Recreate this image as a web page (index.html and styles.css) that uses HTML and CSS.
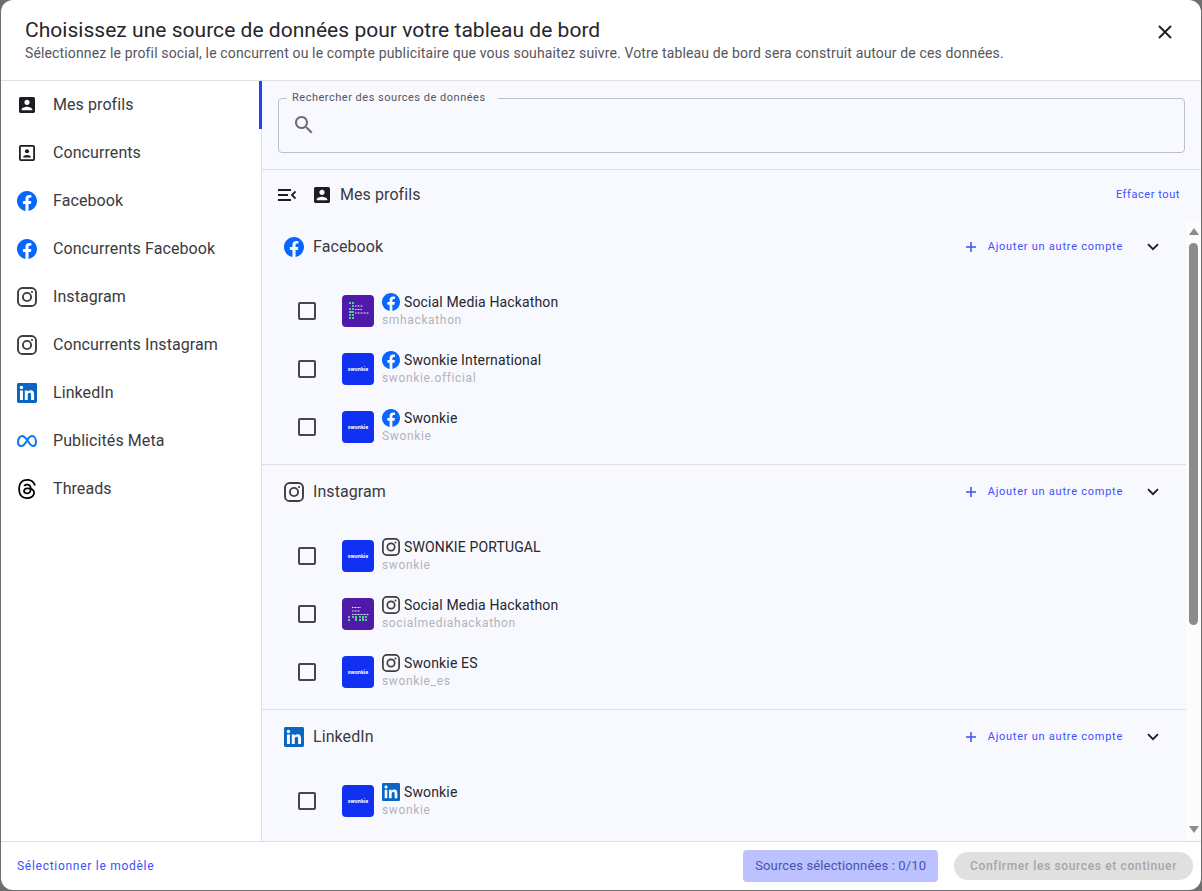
FILE: index.html
```html
<!DOCTYPE html>
<html lang="fr">
<head>
<meta charset="utf-8">
<title>Sources de données</title>
<link rel="stylesheet" href="styles.css">
</head>
<body>
<svg class="defs" aria-hidden="true">
  <symbol id="i-fb" viewBox="0 0 24 24"><path fill="#0866ff" d="M24 12.073c0-6.627-5.373-12-12-12s-12 5.373-12 12c0 5.99 4.388 10.954 10.125 11.854v-8.385H7.078v-3.47h3.047V9.43c0-3.007 1.792-4.669 4.533-4.669 1.312 0 2.686.235 2.686.235v2.953H15.83c-1.491 0-1.956.925-1.956 1.874v2.25h3.328l-.532 3.47h-2.796v8.385C19.612 23.027 24 18.062 24 12.073z"/></symbol>
  <symbol id="i-ig" viewBox="0 0 20 20"><rect x="1" y="1" width="18" height="18" rx="4.6" fill="none" stroke="#3d3d42" stroke-width="1.9"/><circle cx="10" cy="10" r="4.1" fill="none" stroke="#3d3d42" stroke-width="1.9"/><circle cx="15" cy="5" r="1.1" fill="#3d3d42"/></symbol>
  <symbol id="i-li" viewBox="0 0 24 24"><path fill="#0a66c2" d="M20.447 20.452h-3.554v-5.569c0-1.328-.027-3.037-1.852-3.037-1.853 0-2.136 1.445-2.136 2.939v5.667H9.351V9h3.414v1.561h.046c.477-.9 1.637-1.85 3.37-1.85 3.601 0 4.267 2.37 4.267 5.455v6.286zM5.337 7.433c-1.144 0-2.063-.926-2.063-2.065 0-1.138.92-2.063 2.063-2.063 1.14 0 2.064.925 2.064 2.063 0 1.139-.925 2.065-2.064 2.065zm1.782 13.019H3.555V9h3.564v11.452zM22.225 0H1.771C.792 0 0 .774 0 1.729v20.542C0 23.227.792 24 1.771 24h20.451C23.2 24 24 23.227 24 22.271V1.729C24 .774 23.2 0 22.222 0h.003z"/></symbol>
  <symbol id="i-meta" viewBox="0 0 20 20"><path fill="none" stroke="#0a78f5" stroke-width="2" d="M5 5C2.400 5 1 8.400 1 11c0 2.500 1.400 4 3.500 4C7 15 8.800 11.600 10.300 9 11.800 6.400 13 5 15 5c2.600 0 4 3.200 4 6 0 2.500-1.100 4-3 4-2.500 0-4.300-3.800-5.900-6C8.300 6.500 7 5 5 5z"/></symbol>
  <symbol id="i-th" viewBox="0 0 24 24"><path fill="#000" d="M12.186 24h-.007c-3.581-.024-6.334-1.205-8.184-3.509C2.35 18.44 1.5 15.586 1.472 12.01v-.017c.03-3.579.879-6.43 2.525-8.482C5.845 1.205 8.6.024 12.18 0h.014c2.746.02 5.043.725 6.826 2.098 1.677 1.29 2.858 3.13 3.509 5.467l-2.04.569c-1.104-3.96-3.898-5.984-8.304-6.015-2.91.022-5.11.936-6.54 2.717C4.307 6.504 3.616 8.914 3.589 12c.027 3.086.718 5.496 2.057 7.164 1.43 1.783 3.631 2.698 6.54 2.717 2.623-.02 4.358-.631 5.8-2.045 1.647-1.613 1.618-3.593 1.09-4.798-.31-.71-.873-1.3-1.634-1.75-.192 1.352-.622 2.446-1.284 3.272-.886 1.102-2.14 1.704-3.73 1.79-1.202.065-2.361-.218-3.259-.801-1.063-.689-1.685-1.74-1.752-2.964-.065-1.19.408-2.285 1.33-3.082.88-.76 2.119-1.207 3.583-1.291a13.853 13.853 0 0 1 3.02.142c-.126-.742-.375-1.332-.75-1.757-.513-.586-1.308-.883-2.359-.89h-.029c-.844 0-1.992.232-2.721 1.32L7.734 7.847c.98-1.454 2.568-2.256 4.478-2.256h.044c3.194.02 5.097 1.975 5.287 5.388.108.046.216.094.321.142 1.49.7 2.58 1.761 3.154 3.07.797 1.82.871 4.79-1.548 7.158-1.85 1.81-4.094 2.628-7.277 2.65Zm1.003-11.69c-.242 0-.487.007-.739.021-1.836.103-2.98.946-2.916 2.143.067 1.256 1.452 1.839 2.784 1.767 1.224-.065 2.818-.543 3.086-3.71a10.5 10.5 0 0 0-2.215-.221z"/></symbol>
  <symbol id="i-acc" viewBox="0.75 0.75 22.5 22.5"><path fill="#1c1c22" d="M3 5v14c0 1.100.89 2 2 2h14c1.100 0 2-.9 2-2V5c0-1.100-.9-2-2-2H5c-1.110 0-2 .9-2 2zm12 4c0 1.660-1.340 3-3 3s-3-1.340-3-3 1.340-3 3-3 3 1.340 3 3zm-9 8c0-2 4-3.100 6-3.100s6 1.100 6 3.100v1H6v-1z"/></symbol>
  <symbol id="i-acc-o" viewBox="0.75 0.75 22.5 22.5"><rect x="4" y="4" width="16" height="16" rx="1.200" fill="none" stroke="#1c1c22" stroke-width="2"/><circle cx="12" cy="10" r="2.300" fill="#1c1c22"/><path fill="#1c1c22" d="M7.500 17c0-1.900 3-2.700 4.500-2.700s4.500.8 4.500 2.700z"/></symbol>
  <symbol id="i-chev" viewBox="0 0 12 8"><path d="M1 1.200l5 5 5-5" fill="none" stroke="#1c1c22" stroke-width="1.800"/></symbol>
  <symbol id="i-plus" viewBox="0 0 12 12"><path d="M6 1v10M1 6h10" fill="none" stroke="#3d50fa" stroke-width="1.500"/></symbol>
  <symbol id="t-g1" viewBox="0 0 32 32"><g fill="#4fd08c"><rect x="7" y="7" width="2" height="2"/><rect x="10" y="7" width="2" height="2"/><rect x="10" y="10" width="2" height="2"/><rect x="7" y="13" width="2" height="2"/><rect x="10" y="13" width="2" height="2"/><rect x="7" y="16" width="5" height="2"/><rect x="7" y="19" width="2" height="2"/><rect x="10" y="19" width="2" height="2"/><rect x="7" y="22" width="2" height="2"/><rect x="10" y="22" width="2" height="2"/></g><g fill="none" stroke="#e9e4f7" stroke-dasharray="1 .5"><path d="M13 11h8M13 14.500h7M13 18h14"/></g></symbol>
  <symbol id="t-g2" viewBox="0 0 32 32"><g fill="none" stroke="#e9e4f7" stroke-dasharray="1 .5"><path d="M10 9.500h9M10 13h8M10 16.500h17"/></g><g fill="#4fd08c"><rect x="6" y="18" width="2" height="2"/><rect x="6" y="21" width="2" height="2"/><rect x="10" y="18" width="2" height="2"/><rect x="13" y="18" width="2" height="5"/><rect x="17" y="18" width="2" height="2"/><rect x="17" y="21" width="2" height="2"/><rect x="20" y="18" width="2" height="5"/><rect x="23" y="18" width="2" height="2"/><rect x="23" y="21" width="2" height="2"/></g></symbol>
</svg>

<div class="modal">
  <header class="head">
    <div class="head-text">
      <h1 class="title">Choisissez une source de données pour votre tableau de bord</h1>
      <p class="subtitle">Sélectionnez le profil social, le concurrent ou le compte publicitaire que vous souhaitez suivre. Votre tableau de bord sera construit autour de ces données.</p>
    </div>
    <svg class="close" viewBox="0 0 14 14"><path d="M1 1l12 12M13 1L1 13" fill="none" stroke="#1c1c22" stroke-width="1.900"/></svg>
  </header>

  <div class="body">
    <nav class="side">
      <a class="side-item is-active"><svg class="ic20"><use href="#i-acc"/></svg><span>Mes profils</span></a>
      <a class="side-item"><svg class="ic20"><use href="#i-acc-o"/></svg><span>Concurrents</span></a>
      <a class="side-item"><svg class="ic20"><use href="#i-fb"/></svg><span>Facebook</span></a>
      <a class="side-item"><svg class="ic20"><use href="#i-fb"/></svg><span>Concurrents Facebook</span></a>
      <a class="side-item"><svg class="ic20"><use href="#i-ig"/></svg><span>Instagram</span></a>
      <a class="side-item"><svg class="ic20"><use href="#i-ig"/></svg><span>Concurrents Instagram</span></a>
      <a class="side-item"><svg class="ic20"><use href="#i-li"/></svg><span>LinkedIn</span></a>
      <a class="side-item"><svg class="ic20"><use href="#i-meta"/></svg><span>Publicités Meta</span></a>
      <a class="side-item"><svg class="ic20"><use href="#i-th"/></svg><span>Threads</span></a>
    </nav>

    <main class="main">
      <div class="search-wrap">
        <fieldset class="search">
          <legend class="search-label">Rechercher des sources de données</legend>
          <svg class="search-ic" viewBox="0 0 24 24"><path fill="#6b6b72" d="M15.500 14h-.79l-.28-.27C15.410 12.590 16 11.110 16 9.500 16 5.910 13.090 3 9.500 3S3 5.910 3 9.500 5.910 16 9.500 16c1.610 0 3.090-.59 4.230-1.570l.27.28v.79l5 4.990L20.490 19l-4.990-5zm-6 0C7.010 14 5 11.990 5 9.500S7.010 5 9.500 5 14 7.010 14 9.500 11.990 14 9.500 14z"/></svg>
        </fieldset>
      </div>

      <div class="toolbar">
        <svg class="collapse" viewBox="0 0 18 12"><path d="M0 1h13M0 6h10M0 11h13M17.500 2.500L14 6l3.500 3.500" fill="none" stroke="#1c1c22" stroke-width="1.800"/></svg>
        <svg class="ic20"><use href="#i-acc"/></svg>
        <span class="toolbar-title">Mes profils</span>
        <a class="clear">Effacer tout</a>
      </div>

      <div class="list-area">
        <div class="list">
          <section class="group">
            <div class="group-head">
              <svg class="ic20"><use href="#i-fb"/></svg>
              <span class="group-name">Facebook</span>
              <a class="add"><svg class="plus"><use href="#i-plus"/></svg><span class="add-text">Ajouter un autre compte</span></a>
              <svg class="chev"><use href="#i-chev"/></svg>
            </div>
            <div class="row"><span class="check"></span><span class="tile tile-p"><svg class="tile-art"><use href="#t-g1"/></svg></span><div class="info"><div class="name"><svg class="ic18"><use href="#i-fb"/></svg>Social Media Hackathon</div><div class="handle">smhackathon</div></div></div>
            <div class="row"><span class="check"></span><span class="tile tile-s">swonkie</span><div class="info"><div class="name"><svg class="ic18"><use href="#i-fb"/></svg>Swonkie International</div><div class="handle">swonkie.official</div></div></div>
            <div class="row"><span class="check"></span><span class="tile tile-s">swonkie</span><div class="info"><div class="name"><svg class="ic18"><use href="#i-fb"/></svg>Swonkie</div><div class="handle">Swonkie</div></div></div>
          </section>
          <section class="group">
            <div class="group-head">
              <svg class="ic20"><use href="#i-ig"/></svg>
              <span class="group-name">Instagram</span>
              <a class="add"><svg class="plus"><use href="#i-plus"/></svg><span class="add-text">Ajouter un autre compte</span></a>
              <svg class="chev"><use href="#i-chev"/></svg>
            </div>
            <div class="row"><span class="check"></span><span class="tile tile-s">swonkie</span><div class="info"><div class="name"><svg class="ic18"><use href="#i-ig"/></svg>SWONKIE PORTUGAL</div><div class="handle">swonkie</div></div></div>
            <div class="row"><span class="check"></span><span class="tile tile-p"><svg class="tile-art"><use href="#t-g2"/></svg></span><div class="info"><div class="name"><svg class="ic18"><use href="#i-ig"/></svg>Social Media Hackathon</div><div class="handle">socialmediahackathon</div></div></div>
            <div class="row"><span class="check"></span><span class="tile tile-s">swonkie</span><div class="info"><div class="name"><svg class="ic18"><use href="#i-ig"/></svg>Swonkie ES</div><div class="handle">swonkie_es</div></div></div>
          </section>
          <section class="group">
            <div class="group-head">
              <svg class="ic20"><use href="#i-li"/></svg>
              <span class="group-name">LinkedIn</span>
              <a class="add"><svg class="plus"><use href="#i-plus"/></svg><span class="add-text">Ajouter un autre compte</span></a>
              <svg class="chev"><use href="#i-chev"/></svg>
            </div>
            <div class="row"><span class="check"></span><span class="tile tile-s">swonkie</span><div class="info"><div class="name"><svg class="ic18"><use href="#i-li"/></svg>Swonkie</div><div class="handle">swonkie</div></div></div>
          </section>
        </div>
        <div class="scrollbar">
          <span class="arrow-up"></span>
          <span class="thumb"></span>
          <span class="arrow-down"></span>
        </div>
      </div>
    </main>
  </div>

  <footer class="foot">
    <a class="template">Sélectionner le modèle</a>
    <span class="badge"><span class="badge-text">Sources sélectionnées : 0/10</span></span>
    <button class="confirm" disabled>Confirmer les sources et continuer</button>
  </footer>
</div>
</body>
</html>
```

FILE: styles.css
```css
* { box-sizing: border-box; }
html, body { height: 100%; }
body {
  margin: 0;
  padding: 0 1px 1px;
  background: #6e6e6e;
  font-family: Roboto, "Liberation Sans", sans-serif;
  color: #26262c;
  overflow: hidden;
}
.defs { width: 0; height: 0; position: absolute; }
.modal {
  height: 100%;
  background: #fff;
  border-radius: 12px;
  overflow: hidden;
  display: flex;
  flex-direction: column;
}
.head {
  height: 81px;
  flex: none;
  padding: 17px 29px 0 24px;
  display: flex;
  justify-content: space-between;
  align-items: flex-start;
  border-bottom: 1px solid #e0e0e3;
}
.title {
  margin: 0;
  font-size: 21px;
  line-height: 26px;
  letter-spacing: .03px;
  font-weight: 400;
  color: #26262c;
}
.subtitle {
  margin: 1px 0 0;
  font-size: 14px;
  line-height: 18px;
  letter-spacing: .14px;
  color: #55555c;
}
.close { width: 14px; height: 14px; margin-top: 8px; flex: none; }
.body { flex: 1; min-height: 0; display: flex; }
.side {
  width: 261px;
  flex: none;
  border-right: 1px solid #e0e0e3;
  background: #fff;
}
.side-item {
  position: relative;
  height: 48px;
  display: flex;
  align-items: center;
  gap: 16px;
  padding-left: 16px;
  font-size: 16px;
  letter-spacing: .08px;
  color: #3a3a40;
}
.side-item span { margin-bottom: 2px; }
.is-active::after {
  content: "";
  position: absolute;
  right: -1px;
  top: 0;
  bottom: 0;
  width: 3px;
  background: #2a3ff0;
}
.ic20 { width: 20px; height: 20px; flex: none; }
.ic18 { width: 18px; height: 18px; flex: none; }
.main {
  flex: 1;
  min-width: 0;
  background: #f8f9ff;
  display: flex;
  flex-direction: column;
}
.search-wrap {
  flex: none;
  height: 89px;
  padding: 10px 16px 0;
  border-bottom: 1px solid #e0e0e3;
}
.search {
  margin: 0;
  padding: 0 0 0 8px;
  height: 62px;
  border: 1px solid #bfc0c6;
  border-radius: 4px;
  display: flex;
}
.search-label {
  padding: 0 12px 0 5px;
  margin-left: 0;
  font-size: 11px;
  line-height: 14px;
  letter-spacing: .51px;
  color: #55555c;
}
.search-ic { width: 24px; height: 24px; margin-top: 8px; margin-left: 5px; }
.toolbar {
  flex: none;
  height: 50px;
  display: flex;
  align-items: center;
  padding: 0 21px 0 16px;
}
.collapse { width: 18px; height: 12px; margin-right: 16px; flex: none; }
.toolbar-title { margin: 0 0 2px 8px; font-size: 16px; letter-spacing: .08px; color: #3a3a40; }
.clear {
  margin: 0 0 2px auto;
  font-size: 11px;
  letter-spacing: .57px;
  color: #3d50fa;
}
.list-area { flex: 1; min-height: 0; display: flex; }
.list { flex: 1; min-width: 0; overflow: hidden; }
.group {
  height: 245px;
  border-bottom: 1px solid #e0e0e3;
}
.group-head {
  height: 54px;
  display: flex;
  align-items: center;
  padding: 0 27px 0 22px;
}
.group-name { margin: 0 0 2px 9px; font-size: 16px; letter-spacing: .08px; color: #3a3a40; }
.add {
  margin-left: auto;
  display: flex;
  align-items: center;
  gap: 11px;
  font-size: 11px;
  letter-spacing: .75px;
  color: #3d50fa;
}
.add-text { margin-bottom: 2px; }
.plus { width: 12px; height: 12px; flex: none; }
.chev { width: 12px; height: 8px; margin-left: 24px; flex: none; }
.row {
  height: 58px;
  display: flex;
  align-items: center;
  padding-left: 36px;
}
.group-head + .row { margin-top: 8px; }
.check {
  width: 18px;
  height: 18px;
  flex: none;
  border: 2px solid #45454b;
  border-radius: 2px;
}
.tile {
  width: 32px;
  height: 32px;
  margin-left: 26px;
  flex: none;
  border-radius: 4px;
  display: flex;
  align-items: center;
  justify-content: center;
}
.tile-s {
  background: #1130f2;
  color: #fff;
  font-family: Inter, sans-serif;
  font-size: 5px;
  font-weight: 700;
}
.tile-p { background: #4f1aa8; }
.tile-art { width: 32px; height: 32px; }
.info { margin: -2px 0 0 8px; }
.name {
  display: flex;
  align-items: center;
  gap: 4px;
  height: 18px;
  font-size: 14px;
  letter-spacing: .14px;
  color: #26262c;
}
.handle {
  margin-top: 1px;
  font-size: 12px;
  line-height: 16px;
  letter-spacing: .65px;
  color: #b2b3ba;
}
.scrollbar {
  width: 15px;
  flex: none;
  background: #fcfcfd;
  display: flex;
  flex-direction: column;
  align-items: center;
  padding: 8px 0;
}
.arrow-up, .arrow-down {
  width: 0;
  height: 0;
  border-left: 5px solid transparent;
  border-right: 5px solid transparent;
  flex: none;
}
.arrow-up { border-bottom: 7px solid #8c8c8c; }
.arrow-down { border-top: 7px solid #8c8c8c; margin-top: auto; }
.thumb {
  width: 9px;
  height: 382px;
  margin-top: 8px;
  border-radius: 5px;
  background: #8c8c8c;
}
.foot {
  flex: none;
  height: 49px;
  display: flex;
  align-items: center;
  padding: 0 8px 0 16px;
  border-top: 1px solid #e0e0e3;
}
.template {
  font-size: 12px;
  letter-spacing: .72px;
  color: #3d50fa;
  margin-right: auto;
}
.badge {
  height: 32px;
  padding: 0 12px;
  display: flex;
  align-items: center;
  border-radius: 4px;
  background: #bcc2ff;
  color: #4a52ad;
  font-size: 13px;
  letter-spacing: .13px;
}
.badge-text { margin-bottom: 2px; }
.confirm {
  height: 28px;
  margin-left: 16px;
  padding: 0 16px;
  border: 0;
  border-radius: 14px;
  background: #e0e0e0;
  color: #a6a6a6;
  font-family: inherit;
  font-size: 12px;
  font-weight: 500;
  letter-spacing: .63px;
}
```
